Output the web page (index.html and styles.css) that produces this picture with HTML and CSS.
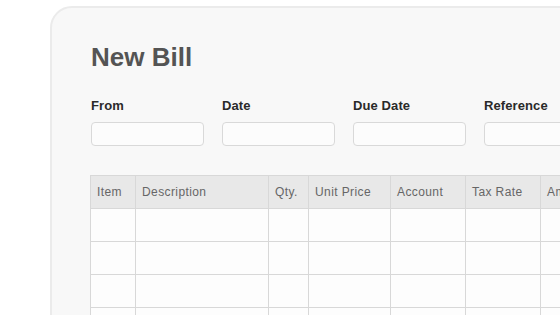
FILE: index.html
```html
<!DOCTYPE html>
<html>
<head>
<meta charset="utf-8">
<link rel="stylesheet" href="styles.css">
</head>
<body>
<div class="card">
  <h1 class="title">New Bill</h1>
  <div class="fields">
    <div class="field"><label class="label">From</label><div class="input"></div></div>
    <div class="field"><label class="label">Date</label><div class="input"></div></div>
    <div class="field"><label class="label">Due Date</label><div class="input"></div></div>
    <div class="field"><label class="label">Reference</label><div class="input"></div></div>
  </div>
  <table class="grid">
    <colgroup>
      <col class="c-item"><col class="c-desc"><col class="c-qty"><col class="c-price"><col class="c-acc"><col class="c-tax"><col class="c-amt">
    </colgroup>
    <thead>
      <tr><th>Item</th><th>Description</th><th>Qty.</th><th>Unit Price</th><th>Account</th><th>Tax Rate</th><th>Amount</th></tr>
    </thead>
    <tbody>
      <tr><td></td><td></td><td></td><td></td><td></td><td></td><td></td></tr>
      <tr><td></td><td></td><td></td><td></td><td></td><td></td><td></td></tr>
      <tr><td></td><td></td><td></td><td></td><td></td><td></td><td></td></tr>
      <tr><td></td><td></td><td></td><td></td><td></td><td></td><td></td></tr>
    </tbody>
  </table>
</div>
</body>
</html>
```
FILE: styles.css
```css
html, body {
  margin: 0;
  padding: 0;
  background: #ffffff;
  overflow: hidden;
  width: 560px;
  height: 315px;
}
body {
  font-family: "Liberation Sans", Arial, sans-serif;
}
.card {
  box-sizing: border-box;
  margin: 6px 0 0 50px;
  width: 640px;
  height: 400px;
  border: 2px solid #ebebeb;
  border-radius: 22px;
  background: #f8f8f8;
  padding: 33px 0 0 39px;
}
.title {
  margin: 0;
  font-size: 26px;
  line-height: 32px;
  font-weight: 700;
  color: #545454;
}
.fields {
  display: grid;
  grid-template-columns: repeat(4, 113px);
  column-gap: 18px;
  margin-top: 25px;
}
.field {
  display: flex;
  flex-direction: column;
}
.label {
  font-size: 13px;
  line-height: 16px;
  font-weight: 700;
  color: #2a2a2a;
  letter-spacing: 0.1px;
}
.input {
  margin-top: 8px;
  box-sizing: border-box;
  height: 24px;
  border: 1px solid #d9d9d9;
  border-radius: 4px;
  background: #fcfcfc;
}
.grid {
  margin-top: 29px;
  margin-left: -1px;
  border-collapse: collapse;
  table-layout: fixed;
  width: 560px;
}
.c-item { width: 45px; }
.c-desc { width: 133px; }
.c-qty { width: 40px; }
.c-price { width: 82px; }
.c-acc { width: 75px; }
.c-tax { width: 75px; }
.c-amt { width: 110px; }
.grid th, .grid td {
  border: 1px solid #d8d8d8;
}
.grid th {
  height: 32px;
  padding: 0 0 0 6px;
  background: #e8e8e8;
  color: #666666;
  font-size: 12px;
  font-weight: 400;
  letter-spacing: 0.4px;
  text-align: left;
  white-space: nowrap;
  overflow: hidden;
}
.grid td {
  height: 32px;
  padding: 0;
  background: #fdfdfd;
}
```
